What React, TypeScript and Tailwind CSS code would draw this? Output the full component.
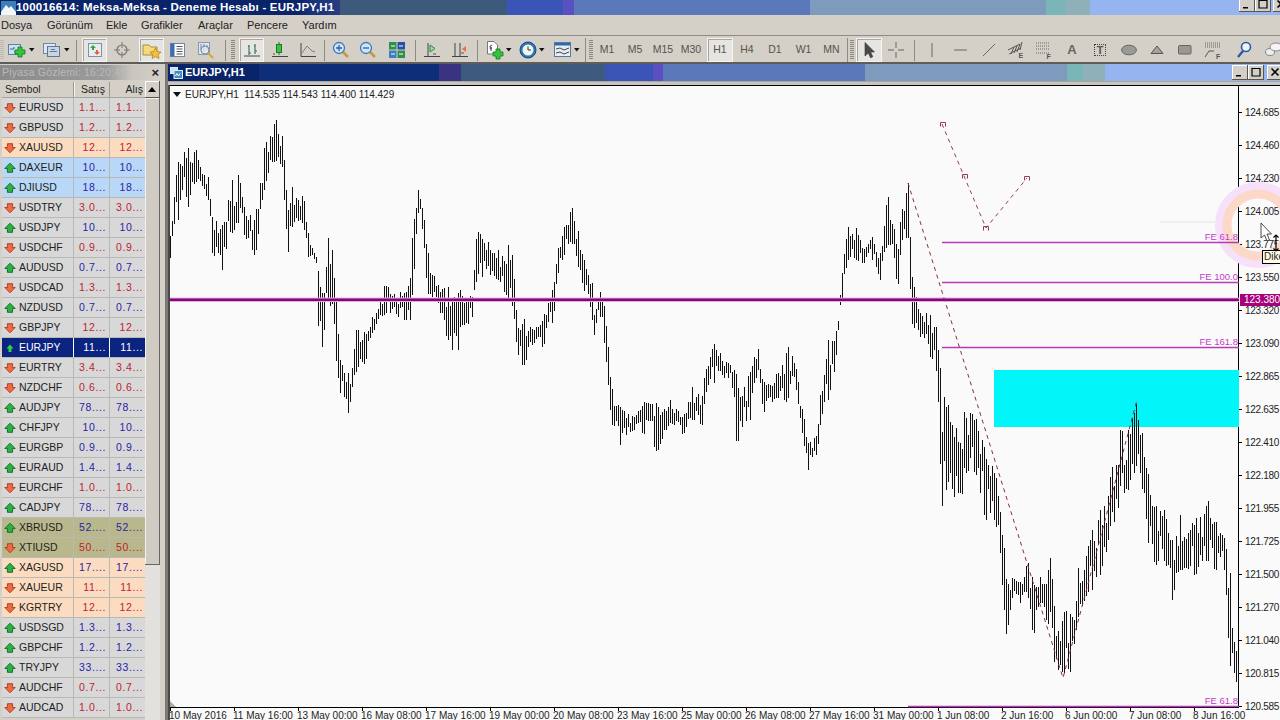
import React from "react";

const FONT = "font-['Liberation_Sans',Arial,sans-serif]";

// ---------- chart data: envelope anchors [x, top, bottom] ----------
const ENV: [number, number, number][] = [
  [170,233,258],[178,155,220],[188,148,207],[195,148,180],[208,177,200],[212,217,253],[222,220,270],[232,180,233],[238,170,223],[245,213,237],[255,217,257],[265,140,183],[275,118,160],[282,133,167],[285,173,217],[288,210,252],[292,187,227],[303,193,223],[308,233,257],[316,257,263],[317,257,340],[322,287,347],[328,238,300],[332,250,327],[337,313,370],[340,360,393],[348,373,413],[357,325,367],[365,333,363],[372,317,333],[385,283,313],[405,293,320],[410,273,320],[413,220,283],[418,187,213],[423,210,233],[427,250,293],[438,283,303],[448,287,363],[458,287,350],[472,297,317],[477,225,273],[482,235,277],[498,247,280],[508,245,300],[513,257,307],[517,327,353],[523,318,367],
  [533,330,343],[543,317,347],[553,287,320],[558,245,273],[563,230,257],[571,205,240],[578,227,267],[583,257,287],[592,283,320],[594,313,335],[600,292,317],[605,310,350],[607,333,373],[611,387,422],[620,407,445],[633,417,430],[643,402,433],[657,403,452],[670,397,423],[683,417,435],[692,387,420],[702,393,425],[705,370,393],[714,340,383],[728,363,378],[734,367,397],[737,377,463],[742,393,427],[750,367,420],[758,347,370],[763,383,413],[777,373,397],[787,345,403],[793,358,370],[797,373,397],[803,413,440],[808,443,470],[817,435,453],[820,395,425],[828,340,400],[835,337,367],[838,320,330],[842,270,298],[847,227,260],[857,228,260],[863,250,263],[872,237,260],[880,253,280],[887,192,243],[895,230,260],[897,257,298],[901,210,240],[907,183,237],[909,183,287],[911,277,320],[913,277,327],[920,313,337],[930,310,357],[937,330,373],[940,368,505],[947,400,515],[953,430,517],[965,410,490],[975,415,470],[985,450,520],[995,470,520],[1001,520,560],[1003,535,638],[1007,585,632],[1012,578,598],[1020,582,603],[1027,560,590],[1033,580,638],[1040,577,603],[1047,580,623],[1050,550,627],[1053,593,660],[1058,627,670],[1063,613,673],[1070,608,672],[1075,620,637],[1078,563,617],[1087,550,593],[1092,530,590],[1100,510,575],[1110,470,540],[1120,430,510],[1128,430,490],[1135,400,490],[1142,425,505],[1147,470,540],[1155,505,565],[1165,510,560],[1172,540,600],[1180,515,570],[1195,520,575],[1207,498,560],[1215,520,570],[1225,540,570],[1230,560,693],[1232,628,653],[1234,638,673],[1237,657,687],[1239,667,697],
];

function makeBars() {
  let s = 20160610;
  const rnd = () => {
    s = (s + 0x6d2b79f5) | 0;
    let t = Math.imul(s ^ (s >>> 15), 1 | s);
    t = (t + Math.imul(t ^ (t >>> 7), 61 | t)) ^ t;
    return ((t ^ (t >>> 14)) >>> 0) / 4294967296;
  };
  let d = "";
  let k = 0;
  for (let x = 170; x <= 1238; x += 2) {
    while (k < ENV.length - 2 && ENV[k + 1][0] < x) k++;
    const [x0, t0, b0] = ENV[k];
    const [x1, t1, b1] = ENV[k + 1];
    const f = Math.max(0, Math.min(1, (x - x0) / (x1 - x0)));
    const top = t0 + (t1 - t0) * f;
    const bot = b0 + (b1 - b0) * f;
    const h = bot - top;
    const L = 0.38 + 0.3 * rnd();
    let a = top + (1 - L) * rnd() * h;
    let b = a + L * h;
    if (Math.abs(x - x0) <= 1 || Math.abs(x - x1) <= 1) {
      a = top + (x % 4 === 0 ? 0 : 0.1 * h);
      b = h < 70 ? bot : a + 0.7 * h;
    }
    d += `M${x + 0.5} ${Math.round(a)}V${Math.round(b)}`;
  }
  return d;
}
const BARS = makeBars();

// ---------- watch list ----------
type Row = { s: string; v: string; up: boolean; bg?: string };
const ORANGE = "bg-[#fbdcc0]";
const BLUE = "bg-[#b9d7f7]";
const OLIVE = "bg-[#b8b88c]";
const ROWS: Row[] = [
  { s: "EURUSD", v: "1.1...", up: false },
  { s: "GBPUSD", v: "1.2...", up: false },
  { s: "XAUUSD", v: "12...", up: false, bg: ORANGE },
  { s: "DAXEUR", v: "10...", up: true, bg: BLUE },
  { s: "DJIUSD", v: "18...", up: true, bg: BLUE },
  { s: "USDTRY", v: "3.0...", up: false },
  { s: "USDJPY", v: "10...", up: true },
  { s: "USDCHF", v: "0.9...", up: false },
  { s: "AUDUSD", v: "0.7...", up: true },
  { s: "USDCAD", v: "1.3...", up: false },
  { s: "NZDUSD", v: "0.7...", up: true },
  { s: "GBPJPY", v: "12...", up: false },
  { s: "EURJPY", v: "11...", up: true, bg: "sel" },
  { s: "EURTRY", v: "3.4...", up: false },
  { s: "NZDCHF", v: "0.6...", up: false },
  { s: "AUDJPY", v: "78....", up: true },
  { s: "CHFJPY", v: "10...", up: true },
  { s: "EURGBP", v: "0.9...", up: true },
  { s: "EURAUD", v: "1.4...", up: true },
  { s: "EURCHF", v: "1.0...", up: false },
  { s: "CADJPY", v: "78....", up: true },
  { s: "XBRUSD", v: "52....", up: true, bg: OLIVE },
  { s: "XTIUSD", v: "50....", up: false, bg: OLIVE },
  { s: "XAGUSD", v: "17....", up: true, bg: ORANGE },
  { s: "XAUEUR", v: "11...", up: false, bg: ORANGE },
  { s: "KGRTRY", v: "12...", up: false, bg: ORANGE },
  { s: "USDSGD", v: "1.3...", up: true },
  { s: "GBPCHF", v: "1.2...", up: true },
  { s: "TRYJPY", v: "33....", up: true },
  { s: "AUDCHF", v: "0.7...", up: false },
  { s: "AUDCAD", v: "1.0...", up: false },
];

const PRICES = ["124.685","124.460","124.230","124.005","123.775","123.550","123.320","123.090","122.865","122.635","122.410","122.180","121.955","121.725","121.500","121.270","121.040","120.815","120.585"];
const TIMES = ["10 May 2016","11 May 16:00","13 May 00:00","16 May 08:00","17 May 16:00","19 May 00:00","20 May 08:00","23 May 16:00","25 May 00:00","26 May 08:00","27 May 16:00","31 May 00:00","1 Jun 08:00","2 Jun 16:00","6 Jun 00:00","7 Jun 08:00","8 Jun 16:00"];
const MENU: [string, string][] = [["Dosya","w-[46px]"],["Görünüm","w-[59px]"],["Ekle","w-[35px]"],["Grafikler","w-[57px]"],["Araçlar","w-[49px]"],["Pencere","w-[55px]"],["Yardım","w-[50px]"]];

// ---------- small pieces ----------
function Arrow({ up, small }: { up: boolean; small?: boolean }) {
  if (up)
    return (
      <svg width="12" height="12" viewBox="0 0 12 12" className="shrink-0">
        {small ? (
          <path d="M6 2.5L9.5 6.5H7.5V10H4.5V6.5H2.5Z" fill="#2fd04a" />
        ) : (
          <path d="M6 1.2L11.2 6.5H8.6V10.3H3.4V6.5H.8Z" fill="#2fb044" stroke="#0d6a22" strokeWidth=".9" />
        )}
      </svg>
    );
  return (
    <svg width="12" height="12" viewBox="0 0 12 12" className="shrink-0">
      <path d="M6 10.8L.8 5.5H3.4V1.7H8.6V5.5H11.2Z" fill="#ee6a40" stroke="#a83a20" strokeWidth=".9" />
    </svg>
  );
}

function Tb({ className = "", pressed, children }: { className?: string; pressed?: boolean; children?: React.ReactNode }) {
  return (
    <div className={`h-[24px] shrink-0 flex items-center justify-center ${pressed ? "bg-[#e7e5e1] border border-[#f6f5f2] shadow-[inset_1px_1px_0_#a8a59e]" : ""} ${className}`}>
      {children}
    </div>
  );
}
const Sep = ({ className }: { className: string }) => (
  <div className={`h-[24px] shrink-0 flex items-center justify-center ${className}`}>
    <div className="w-px h-[21px] bg-[#8d8a84]" />
  </div>
);
const Grip = ({ className }: { className: string }) => (
  <div className={`h-[24px] shrink-0 flex items-center ${className}`}>
    <div className="w-[4px] h-[20px] bg-[repeating-linear-gradient(180deg,#8a8780_0,#8a8780_1px,#d4d0c8_1px,#d4d0c8_2px)]" />
  </div>
);
const Drop = () => (
  <svg width="6" height="4" viewBox="0 0 6 4" className="ml-[2px] shrink-0"><path d="M0 0H5.5L2.75 3.5Z" fill="#111" /></svg>
);
const Ic = ({ w = 20, h = 20, children }: { w?: number; h?: number; children: React.ReactNode }) => (
  <svg width={w} height={h} viewBox={`0 0 ${w} ${h}`} className="shrink-0">{children}</svg>
);
const PlusG = ({ x, y }: { x: number; y: number }) => (
  <path d={`M${x + 3} ${y}h4v3h3v4h-3v3h-4v-3h-3v-4h3z`} fill="#35c53a" stroke="#0e7a22" strokeWidth=".8" />
);
const Tf = ({ t, className }: { t: string; className: string }) => (
  <Tb className={className}><span className="text-[10.5px] text-[#55534f]">{t}</span></Tb>
);

function Bands({ data }: { data: string[] }) {
  return <>{data.map((c, i) => <div key={i} className={`h-full shrink-0 ${c}`} />)}</>;
}

function WinBtn({ className = "", kind }: { className?: string; kind: "min" | "max" | "x" }) {
  return (
    <div className={`h-[15px] w-[16px] shrink-0 bg-[#d4d0c8] border-r border-b border-[#555] shadow-[inset_1px_1px_0_#fff] flex items-center justify-center ${className}`}>
      <svg width="10" height="10" viewBox="0 0 10 10">
        {kind === "min" && <path d="M1 8H6V9.5H1Z" fill="#000" />}
        {kind === "max" && <path d="M1 1.5H9M1 1V9H9V1" fill="none" stroke="#000" strokeWidth="1.2" />}
        {kind === "x" && <path d="M1.5 1.5L8.5 8.5M8.5 1.5L1.5 8.5" stroke="#000" strokeWidth="1.6" />}
      </svg>
    </div>
  );
}

function Toolbar() {
  return (
    <div className="h-[29px] shrink-0 flex items-center pt-[2px] border-t border-t-[#8f8c85] border-b-2 border-b-[#5f5d59] bg-[#d4d0c8] overflow-hidden">
      <Grip className="w-[5px] opacity-30" />
      <Tb className="w-[34px] !justify-start pl-[2px]">
        <Ic w={20} h={18}><rect x="1.5" y="3.5" width="12" height="10" fill="#cfe0ee" stroke="#5a84a8" /><path d="M3 8H7V6M7 11H11" stroke="#3a6a90" fill="none" /><PlusG x={8} y={6} /></Ic><Drop />
      </Tb>
      <Tb className="w-[34px] !justify-start pl-[3px]">
        <Ic w={20} h={18}><rect x="1.5" y="2.5" width="12" height="10" fill="#dfe7ee" stroke="#6d8aa8" /><rect x="5.5" y="5.5" width="12" height="10" fill="#c8d6e4" stroke="#5a7898" /><path d="M7.5 10.5H15M9 8.5H13" stroke="#5a7898" /></Ic><Drop />
      </Tb>
      <Sep className="w-[7px]" />
      <Tb pressed className="w-[25px] ml-[2px]">
        <Ic w={16} h={16}><rect x="1.5" y="1.5" width="13" height="13" fill="#e6edf2" stroke="#7c93a8" /><path d="M6 3L9 6H7V8H5V6H3Z" fill="#2fa83e" /><path d="M10 13L7 10H9V8H11V10H13Z" fill="#e8603a" /></Ic>
      </Tb>
      <Tb className="w-[28px] ml-px">
        <Ic w={18} h={18}><circle cx="9" cy="9" r="5" fill="none" stroke="#777" strokeWidth="1.2" /><path d="M9 1V7M9 11V17M1 9H7M11 9H17" stroke="#777" /></Ic>
      </Tb>
      <Tb pressed className="w-[25px] ml-[3px]">
        <Ic w={20} h={18}><path d="M1 4H7L9 6H15V14H1Z" fill="#f5d97a" stroke="#a88d3a" /><path d="M13.5 7L15.2 10.6L19 11.1L16.2 13.7L17 17.5L13.5 15.6L10 17.5L10.8 13.7L8 11.1L11.8 10.6Z" fill="#f2c23a" stroke="#a87a20" strokeWidth=".7" /></Ic>
      </Tb>
      <Tb className="w-[28px]">
        <Ic w={18} h={16}><rect x="1.5" y="1.5" width="14" height="13" fill="#fff" stroke="#6c88a4" /><rect x="1.5" y="1.5" width="4" height="13" fill="#3d6fb0" /><path d="M7.5 4.5H13.5M7.5 7H13.5M7.5 9.5H13.5M7.5 12H13.5" stroke="#555" /></Ic>
      </Tb>
      <Tb className="w-[29px]">
        <Ic w={20} h={18}><rect x="1.5" y="1.5" width="11" height="12" fill="#dfe5ea" stroke="#8a9aa8" /><path d="M4 3V9M7 3V11M10 4V9" stroke="#6c8aa8" /><circle cx="8" cy="9" r="4" fill="#e8eef2" fillOpacity=".7" stroke="#6c8aa8" /><path d="M11 12L16 17" stroke="#d8a43a" strokeWidth="2" /></Ic>
      </Tb>
      <Sep className="w-[8px]" />
      <Grip className="w-[9px] pl-[2px]" />
      <Tb pressed className="w-[25px] ml-px">
        <Ic w={18} h={16}><path d="M1 14H17" stroke="#444" /><path d="M6 3V13M5 4H6M6 11H8M12 2V12M11 4H12M12 9H14" stroke="#2c6b58" strokeWidth="1.1" fill="none" /></Ic>
      </Tb>
      <Tb className="w-[32px]">
        <Ic w={18} h={18}><path d="M1 15.5H17" stroke="#444" /><path d="M8 1V14" stroke="#2a6a30" /><rect x="5.5" y="3.5" width="5" height="8" fill="#3ec03e" stroke="#1a7a2a" /><path d="M2 13H4" stroke="#555" /></Ic>
      </Tb>
      <Tb className="w-[24px]">
        <Ic w={18} h={18}><path d="M2 2V15.5H17" stroke="#444" fill="none" /><path d="M3 12L8 5L13 10L16 11" stroke="#6c8a7a" fill="none" /></Ic>
      </Tb>
      <Sep className="w-[8px]" />
      <Tb className="w-[26px]">
        <Ic w={18} h={18}><path d="M10.5 10.5L16 16" stroke="#c89a3a" strokeWidth="2.6" /><circle cx="7" cy="7" r="5.5" fill="#cfe4f5" stroke="#3f78b8" strokeWidth="1.3" /><path d="M4 7H10M7 4V10" stroke="#2a60a8" strokeWidth="1.3" /></Ic>
      </Tb>
      <Tb className="w-[28px]">
        <Ic w={18} h={18}><path d="M10.5 10.5L16 16" stroke="#c89a3a" strokeWidth="2.6" /><circle cx="7" cy="7" r="5.5" fill="#cfe4f5" stroke="#3f78b8" strokeWidth="1.3" /><path d="M4 7H10" stroke="#2a60a8" strokeWidth="1.3" /></Ic>
      </Tb>
      <Tb className="w-[30px]">
        <Ic w={18} h={18}><rect x="1" y="1" width="7.5" height="7.5" fill="#2f8f4a" /><rect x="9.5" y="1" width="7.5" height="7.5" fill="#2a4fa8" /><rect x="1" y="9.5" width="7.5" height="7.5" fill="#3a7fc0" /><rect x="9.5" y="9.5" width="7.5" height="7.5" fill="#2f8f4a" /><path d="M3 5H7M11 5H15M3 13H7M11 13H15" stroke="#fff" /></Ic>
      </Tb>
      <Sep className="w-[6px]" />
      <Tb className="w-[28px]">
        <Ic w={18} h={18}><path d="M1 15.5H17M5 2V15" stroke="#444" /><path d="M7 4L12 7.5L7 11Z" fill="#9fe09f" stroke="#2a8a3a" /><path d="M10 13H13" stroke="#555" /></Ic>
      </Tb>
      <Tb className="w-[28px]">
        <Ic w={18} h={18}><path d="M1 15.5H17M4 2V15M9 2V15" stroke="#444" /><path d="M15 5L11 8L15 11Z" fill="#e8703a" /><path d="M10 12H13" stroke="#555" /></Ic>
      </Tb>
      <Sep className="w-[6px]" />
      <Tb className="w-[33px] !justify-start pl-[6px]">
        <Ic w={18} h={20}><path d="M1.5 1.5H8L11.5 5V14H1.5Z" fill="#fff" stroke="#777" /><path d="M4 7C4 5 6 5 6 6M3.5 8H6M5 7V11" stroke="#333" fill="none" /><PlusG x={7} y={9} /></Ic><Drop />
      </Tb>
      <Tb className="w-[33px] !justify-start pl-[6px]">
        <Ic w={18} h={18}><circle cx="9" cy="9" r="8" fill="#2f74b8" stroke="#144a80" /><circle cx="9" cy="9" r="5.5" fill="#f4f4ee" /><path d="M9 5.5V9H12" stroke="#333" fill="none" /></Ic><Drop />
      </Tb>
      <Tb className="w-[36px] !justify-start pl-[8px]">
        <Ic w={18} h={16}><rect x=".5" y=".5" width="16" height="14" fill="#e6edf4" stroke="#5a7a9a" /><rect x="1" y="1" width="15" height="2.5" fill="#2f6ab0" /><path d="M2 7L6 6L10 8L15 6M2 11L6 10L10 12L15 10" stroke="#444" fill="none" /></Ic><Drop />
      </Tb>
      <div className="w-[7px] h-[24px] shrink-0 flex justify-center"><div className="w-px h-full bg-[#8d8a84]" /></div>
      <Grip className="w-[4px]" />
      <Tf t="M1" className="w-[28px]" />
      <Tf t="M5" className="w-[28px]" />
      <Tf t="M15" className="w-[28px]" />
      <Tf t="M30" className="w-[28px]" />
      <Tb pressed className="w-[26px] ml-[2px]"><span className="text-[10.5px] text-[#55534f]">H1</span></Tb>
      <Tf t="H4" className="w-[28px]" />
      <Tf t="D1" className="w-[28px]" />
      <Tf t="W1" className="w-[29px]" />
      <Tf t="MN" className="w-[27px]" />
      <div className="w-[4px] h-[24px] shrink-0 flex justify-center"><div className="w-px h-full bg-[#8d8a84]" /></div>
      <Grip className="w-[6px] pl-px" />
      <Tb pressed className="w-[26px] ml-px">
        <Ic w={14} h={18}><path d="M3 1.5V15L6.3 12L8.5 16.8L10.8 15.8L8.6 11H12.5Z" fill="#4a4a4c" stroke="#333" strokeWidth=".6" /></Ic>
      </Tb>
      <Tb className="w-[28px]"><Ic w={18} h={18}><path d="M9 1V7M9 11V17M1 9H7M11 9H17" stroke="#666" /></Ic></Tb>
      <Sep className="w-[8px]" />
      <Tb className="w-[28px]"><Ic w={4} h={14}><path d="M2 0V14" stroke="#666" /></Ic></Tb>
      <Tb className="w-[29px]"><Ic w={14} h={4}><path d="M0 2H13" stroke="#666" /></Ic></Tb>
      <Tb className="w-[27px]"><Ic w={14} h={14}><path d="M1 13L13 1" stroke="#666" /></Ic></Tb>
      <Tb className="w-[28px]">
        <svg width="18" height="18" viewBox="0 0 18 18"><path d="M1 9L13 3M2 13L14 7M4 13L7 6M7 12L10 5M10 11L13 3M13 9L15 1" stroke="#555" /><text x="11.5" y="17" fontSize="7" fontWeight="700" fill="#555" fontFamily="Liberation Sans">E</text></svg>
      </Tb>
      <Tb className="w-[28px]">
        <svg width="18" height="18" viewBox="0 0 18 18"><path d="M1 2H14M1 5H14M1 8H14M1 12H14" stroke="#666" strokeDasharray="1 1" /><text x="11.5" y="17.5" fontSize="7" fontWeight="700" fill="#555" fontFamily="Liberation Sans">F</text></svg>
      </Tb>
      <Tb className="w-[28px]"><span className="text-[13px] font-bold text-[#666]">A</span></Tb>
      <Tb className="w-[28px]">
        <div className="w-[12px] h-[12px] border border-dotted border-[#444] flex items-center justify-center text-[11px] leading-none font-bold text-[#555]">T</div>
      </Tb>
      <Tb className="w-[29px]"><Ic w={16} h={12}><ellipse cx="8" cy="6" rx="7.4" ry="4.8" fill="#9a9a96" stroke="#666" /></Ic></Tb>
      <Tb className="w-[28px]"><Ic w={14} h={10}><path d="M7 1L13 8.5H1Z" fill="#a5a39d" stroke="#555" /></Ic></Tb>
      <Tb className="w-[28px]"><Ic w={14} h={10}><rect x=".5" y=".5" width="12.5" height="8.5" fill="#999894" stroke="#666" rx="1" /></Ic></Tb>
      <Tb className="w-[27px]">
        <svg width="18" height="18" viewBox="0 0 18 18"><path d="M1 2H16M1 4H16M1 6H16" stroke="#666" strokeDasharray="1 1" /><path d="M1 16L5 10H10" stroke="#555" fill="none" /><text x="12" y="17.5" fontSize="7" fontWeight="700" fill="#555" fontFamily="Liberation Sans">F</text></svg>
      </Tb>
      <Tb className="w-[36px]">
        <Ic w={16} h={18}><path d="M7 10L2 16" stroke="#2c58a8" strokeWidth="2.4" /><circle cx="10" cy="6" r="4.5" fill="#eef3f8" stroke="#2c58a8" strokeWidth="1.6" /></Ic>
      </Tb>
      <Tb className="w-[20px] !justify-start">
        <Ic w={18} h={18}><ellipse cx="8" cy="11" rx="4.5" ry="3.5" fill="#eee" stroke="#888" /><ellipse cx="14" cy="6" rx="6" ry="4" fill="#f4f4f4" stroke="#888" /></Ic>
      </Tb>
    </div>
  );
}

function Watch() {
  return (
    <div className="w-[165px] shrink-0 h-full flex flex-col overflow-hidden bg-[#d4d0c8]">
      <div className="h-[15px] mt-px shrink-0 flex items-center bg-[linear-gradient(90deg,#8a8a8a_0%,#9c9c9c_65%,#c9c6bf_80%,#d4d0c8_100%)] text-[10.5px] text-[#b9b9b9] pl-[2px]">
        <span className="whitespace-nowrap tracking-[0.2px]">Piyasa Gözlemi: 16:20:45</span>
        <span className="ml-auto mr-[6px] text-[13px] font-bold leading-none text-[#222]">×</span>
      </div>
      <div className="flex-1 flex min-h-0 pt-px">
        <div className="w-[145px] shrink-0 flex flex-col pl-[2px]">
          <div className="h-[17px] shrink-0 flex pt-px bg-[#d4d0c8] text-[10.5px] text-[#222] border-b border-[#a8a59e]">
            <div className="w-[72px] pl-[3px] flex items-center border-r border-[#9a9890] shadow-[1px_0_0_#f5f5f0]">Sembol</div>
            <div className="w-[36px] flex items-center justify-center pl-[3px] border-r border-[#9a9890]">Satış</div>
            <div className="flex-1 flex items-center justify-end pr-[2px]">Alış</div>
          </div>
          {ROWS.map((r) => {
            const sel = r.bg === "sel";
            const bg = sel ? "bg-[#0a2480]" : r.bg ?? "bg-[#d8d8d8]";
            const col = sel ? "text-white" : r.up ? "text-[#2a22a8]" : "text-[#c0222e]";
            return (
              <div key={r.s} className={`h-[20px] shrink-0 flex text-[10.5px] items-stretch border-b border-[#b8b8b4] ${bg}`}>
                <div className={`w-[72px] flex items-center gap-[3px] pl-[2px] border-r ${sel ? "border-white text-white" : "border-[#b8b8b4] text-[#222]"}`}>
                  <Arrow up={r.up} small={sel} />
                  <span>{r.s}</span>
                </div>
                <div className={`w-[36px] flex items-center justify-end pr-[3px] border-r tracking-[0.6px] ${sel ? "border-white" : "border-[#b8b8b4]"} ${col}`}>{r.v}</div>
                <div className={`flex-1 flex items-center justify-end pr-[2px] tracking-[0.6px] ${col}`}>{r.v}</div>
              </div>
            );
          })}
        </div>
        <div className="w-[15px] shrink-0 flex flex-col bg-[#e3e1dd]">
          <div className="h-[17px] shrink-0 bg-[#d4d0c8] border-r border-b border-[#555] shadow-[inset_1px_1px_0_#fff] flex items-center justify-center">
            <svg width="8" height="5" viewBox="0 0 8 5"><path d="M4 0L8 5H0Z" fill="#000" /></svg>
          </div>
          <div className="h-[467px] shrink-0 bg-[#d0ccc4] border-r border-b border-[#666] shadow-[inset_1px_1px_0_#f4f2ee]" />
        </div>
        <div className="w-[5px] shrink-0 bg-[#d4d0c8]" />
      </div>
    </div>
  );
}

function Chart() {
  return (
    <div className="relative flex-1 min-w-0 flex flex-col overflow-hidden">
      <div className="h-[17px] shrink-0 flex items-center">
        <Bands data={["w-[91px] bg-[#0a246a]","w-[180px] bg-[#0f2e7a]"]} />
      </div>
      {/* title text */}
      <div className="absolute left-0 top-0 h-[17px] flex items-center pl-[2px] gap-[2px]">
        <svg width="13" height="13" viewBox="0 0 13 13"><rect x=".5" y="1.5" width="7" height="6" fill="#cfdff0" stroke="#dfe9f4" /><rect x="4" y="4.5" width="8.5" height="8" fill="#3f8fc0" stroke="#e0ecf4" /><path d="M5.5 10L7 7.5L8.5 10L10 7.5" stroke="#fff" fill="none" /></svg>
        <span className="text-[11px] font-bold text-white whitespace-nowrap">EURJPY,H1</span>
      </div>
      <div className="absolute left-[271px] right-0 top-0 h-[17px] flex items-center">
        <Bands data={["w-[22px] bg-[#3a3380]","w-[144px] bg-[#3e5a7e]","w-[48px] bg-[#3a55b5]","w-[10px] bg-[#5a50c0]","w-[202px] bg-[#5b78bb]","w-[202px] bg-[#7e9bbd]","w-[16px] bg-[#7ab6b8]","w-[22px] bg-[#8fb0b8]"]} />
        <div className="h-full flex-1 bg-[#96b4f0] flex items-center justify-start pl-[127px]">
          <WinBtn kind="min" />
          <WinBtn kind="max" />
          <WinBtn kind="x" className="ml-[3px]" />
        </div>
      </div>
      <div className="h-[4px] shrink-0 bg-[#c8c5be] border-t border-[#a8a59e]" />
      <div className="flex-1 min-h-0 flex flex-col pl-[2px] bg-[#4a4a4a]">
        <div className="flex-1 min-h-0 bg-[#fafafa] border-t border-black relative overflow-hidden">
          <div className="flex h-[622px]">
            {/* plot */}
            <div className="w-[1069px] shrink-0 h-full border-r border-black border-b relative">
              <div className="pl-[3px] pt-px flex items-center gap-[4px] text-[10px] text-[#222]">
                <svg width="8" height="5" viewBox="0 0 8 5"><path d="M0 0H8L4 5Z" fill="#111" /></svg>
                <span className="whitespace-pre">EURJPY,H1  114.535 114.543 114.400 114.429</span>
              </div>
              <svg className="absolute left-0 bottom-0" width="6" height="6" viewBox="0 0 6 6"><path d="M0 0L6 6H0Z" fill="#a9a9a9" /></svg>
            </div>
            {/* price axis */}
            <div className="flex-1 flex flex-col pt-[10px] text-[10px] text-[#222]">
              {PRICES.map((p) => (
                <div key={p} className="h-[33px] shrink-0 flex items-center gap-[3px]">
                  <div className="w-[3px] h-px bg-black shrink-0" />
                  <span className="tracking-[-0.3px]">{p}</span>
                </div>
              ))}
            </div>
          </div>
          {/* time axis */}
          <div className="flex h-[12px] text-[10px] text-[#222] overflow-hidden">
            {TIMES.map((t) => (
              <div key={t} className="w-[64px] shrink-0 flex flex-col">
                <div className="w-px h-[3px] bg-black shrink-0" />
                <span className="whitespace-nowrap leading-[10px] -ml-px">{t}</span>
              </div>
            ))}
          </div>
          {/* drawing over the plot; origin is page (170,86) */}
          <svg className="absolute left-0 top-0" width="1110" height="634" viewBox="170 86 1110 634">
            <path d="M1160 222H1215" stroke="#f3eeee" strokeWidth="2" />
            <circle cx="1258" cy="225" r="39" fill="none" stroke="#f6e0fa" strokeWidth="8" />
            <circle cx="1258" cy="225" r="31" fill="none" stroke="#fbd8c8" strokeWidth="9" />
            <rect x="994" y="370" width="245" height="57" fill="#00f6f8" />
            <path d={BARS} stroke="#111" strokeWidth="1" shapeRendering="crispEdges" fill="none" />
            <rect x="170" y="297.5" width="1069" height="4.5" fill="#f0a8e0" />
            <rect x="170" y="298.5" width="1069" height="2.5" fill="#7c0a78" />
            <path d="M942 242.5H1239M942 282.5H1239M942 347.5H1239M908 706.5H1239" stroke="#b43cb4" strokeWidth="1.4" />
            <g fill="#c23cc8" fontSize="9.5" fontFamily="Liberation Sans" textAnchor="end">
              <text x="1238" y="240">FE 61.8</text>
              <text x="1238" y="280">FE 100.0</text>
              <text x="1238" y="345">FE 161.8</text>
              <text x="1238" y="704">FE 61.8</text>
            </g>
            <path d="M908 183L1063 678L1137 400" stroke="#8e2a48" strokeWidth="1" strokeDasharray="4 4" fill="none" />
            <path d="M942 124L964 176L986 228L1027 178" stroke="#9a3a55" strokeWidth="1" strokeDasharray="4 4" fill="none" />
            <path d="M940.5 126.5V122.5H945.5V126.5M962.5 178.5V174.5H967.5V178.5M983.5 230.5V226.5H988.5V230.5M1024.5 180.5V176.5H1029.5V180.5" stroke="#9a3a55" fill="none" />
          </svg>
          {/* price tag */}
          <div className="absolute left-[1070px] top-[208px] w-[40px] h-[12px] bg-[#a8007c] text-white text-[10px] leading-[12px] pl-[4px]">123.380</div>
          {/* mouse tooltip */}
          <div className="absolute left-[1092px] top-[164px] h-[14px] w-[30px] bg-[#fffde8] border border-black text-[10px] leading-[12px] pl-px text-[#222] overflow-hidden">Dike</div>
          <svg className="absolute left-[1088px] top-[135px]" width="24" height="32" viewBox="0 0 24 32">
            <path d="M3 2V17L6.5 14L9 20L11.5 19L9 13H13.5Z" fill="#fff" stroke="#222" strokeWidth=".8" />
            <path d="M18 14V30M15.5 16.5L18 14L20.5 16.5M15.5 27.5L18 30L20.5 27.5" stroke="#000" fill="none" strokeWidth="1.2" />
          </svg>
        </div>
      </div>
    </div>
  );
}

export default function App() {
  return (
    <div className={`w-[1280px] h-[720px] overflow-hidden flex flex-col bg-[#d4d0c8] ${FONT}`}>
      {/* window title bar */}
      <div className="h-[15px] shrink-0 flex items-center overflow-hidden">
        <div className="w-[340px] h-full shrink-0 flex items-center bg-[linear-gradient(90deg,#0a246a_0%,#0a246a_88%,#17347a_92%,#2a3a80_100%)]">
          <svg width="15" height="14" viewBox="0 0 15 14" className="shrink-0 ml-px">
            <rect width="15" height="14" fill="#3e7fb8" />
            <path d="M0 11L5 4L8 7L10 5L15 11V14H0Z" fill="#f2f6fa" />
          </svg>
          <span className="text-[11.5px] font-bold text-white whitespace-nowrap tracking-[0.22px]">100016614: Meksa-Meksa - Deneme Hesabı - EURJPY,H1</span>
        </div>
        <Bands data={["w-[167px] bg-[#3d5a7d]","w-[56px] bg-[#3a55b5]","w-[11px] bg-[#5a50c0]","w-[236px] bg-[#5b78bb]","w-[236px] bg-[#7e9bbd]","w-[19px] bg-[#7ab6b8]","w-[25px] bg-[#8fb0b8]"]} />
        <div className="flex-1 h-full bg-[#96b4f0] flex items-start justify-start pl-[149px]">
          <WinBtn kind="min" className="-mt-[3px]" />
          <WinBtn kind="max" className="-mt-[3px]" />
          <WinBtn kind="x" className="ml-[2px] -mt-[3px]" />
        </div>
      </div>
      {/* menu */}
      <div className="h-[20px] shrink-0 flex items-center pl-px text-[11px] text-[#222]">
        {MENU.map(([m, w]) => <div key={m} className={`${w} shrink-0`}>{m}</div>)}
      </div>
      <Toolbar />
      {/* work area */}
      <div className="flex-1 min-h-0 flex bg-[#d4d0c8]">
        <Watch />
        <div className="w-[3px] shrink-0 bg-[#7a7875]" />
        <Chart />
      </div>
    </div>
  );
}
